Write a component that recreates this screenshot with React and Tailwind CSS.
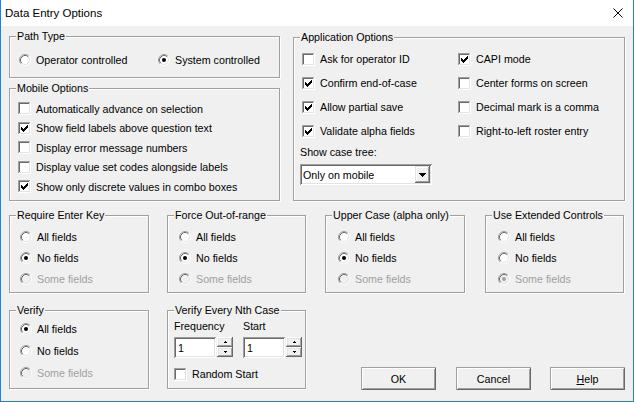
import React from "react";

function Radio({ checked, disabled }) {
  return (
    <svg width="12" height="12" viewBox="0 0 12 12" className="shrink-0">
      <circle cx="6" cy="6" r="5" fill={disabled ? "#f0f0f0" : "#fff"} />
      <path d="M2.11 9.89A5.5 5.5 0 0 1 9.89 2.11" fill="none" stroke="#a0a0a0" />
      <path d="M9.89 2.11A5.5 5.5 0 0 1 2.11 9.89" fill="none" stroke="#ffffff" />
      <path d="M2.82 9.18A4.5 4.5 0 0 1 9.18 2.82" fill="none" stroke="#696969" />
      <path d="M9.18 2.82A4.5 4.5 0 0 1 2.82 9.18" fill="none" stroke="#e3e3e3" />
      {checked && <circle cx="6" cy="6" r="2" fill={disabled ? "#a0a0a0" : "#000"} />}
    </svg>
  );
}

function Check({ checked }) {
  const cols = [
    [3, 5],
    [4, 6],
    [5, 7],
    [6, 6],
    [7, 5],
    [8, 4],
    [9, 3],
  ];
  return (
    <svg width="13" height="13" viewBox="0 0 13 13" className="shrink-0" shapeRendering="crispEdges">
      <rect x="0" y="0" width="13" height="13" fill="#fff" />
      <rect x="0" y="0" width="12" height="1" fill="#a0a0a0" />
      <rect x="0" y="0" width="1" height="12" fill="#a0a0a0" />
      <rect x="1" y="1" width="10" height="1" fill="#696969" />
      <rect x="1" y="1" width="1" height="10" fill="#696969" />
      <rect x="1" y="11" width="11" height="1" fill="#e3e3e3" />
      <rect x="11" y="1" width="1" height="11" fill="#e3e3e3" />
      {checked &&
        cols.map(([x, y]) => <rect key={x} x={x} y={y} width="1" height="3" fill="#000" />)}
    </svg>
  );
}

function Group({ title, className, children }) {
  return (
    <div
      className={`relative border border-[#a0a0a0] shadow-[inset_1px_1px_0_#fff,1px_1px_0_#fff] ${className}`}
    >
      <span className="absolute left-[6px] top-[-7px] px-[1px] bg-[#f0f0f0] leading-[13px] whitespace-nowrap">
        {title}
      </span>
      {children}
    </div>
  );
}

function RadioItem({ label, checked, disabled, className = "" }) {
  return (
    <div className={`flex items-center gap-[5px] ${className}`}>
      <Radio checked={checked} disabled={disabled} />
      <span className={`whitespace-nowrap ${disabled ? "text-[#a0a0a0]" : ""}`}>{label}</span>
    </div>
  );
}

function CheckItem({ label, checked, className = "" }) {
  return (
    <div className={`flex items-center gap-[5px] ${className}`}>
      <Check checked={checked} />
      <span className="whitespace-nowrap">{label}</span>
    </div>
  );
}

function RadioGroup({ title, sel, className, pl, pt, rowH }) {
  const items = ["All fields", "No fields", "Some fields"];
  return (
    <Group title={title} className={className}>
      <div className={`flex flex-col ${pl} ${pt}`}>
        {items.map((it, i) => (
          <RadioItem
            key={it}
            label={it}
            checked={i === sel}
            disabled={i === 2}
            className={rowH}
          />
        ))}
      </div>
    </Group>
  );
}

function Spin({ value }) {
  return (
    <div className="flex">
      <div className="w-[42px] h-[21px] bg-white shadow-[inset_1px_1px_0_#a0a0a0,inset_-1px_-1px_0_#fff,inset_2px_2px_0_#696969,inset_-2px_-2px_0_#e3e3e3] flex items-center pl-[4px]">
        {value}
      </div>
      <div className="flex flex-col w-[16px] ml-[1px]">
        <div className="h-[10px] bg-[#f0f0f0] shadow-[inset_-1px_-1px_0_#696969,inset_1px_1px_0_#fff,inset_-2px_-2px_0_#a0a0a0,inset_2px_2px_0_#e3e3e3] flex items-center justify-center">
          <svg width="3" height="2" viewBox="0 0 3 2" shapeRendering="crispEdges">
            <rect x="1" y="0" width="1" height="1" fill="#000" />
            <rect x="0" y="1" width="3" height="1" fill="#000" />
          </svg>
        </div>
        <div className="h-[10px] bg-[#f0f0f0] shadow-[inset_-1px_-1px_0_#696969,inset_1px_1px_0_#fff,inset_-2px_-2px_0_#a0a0a0,inset_2px_2px_0_#e3e3e3] flex items-center justify-center">
          <svg width="3" height="2" viewBox="0 0 3 2" shapeRendering="crispEdges">
            <rect x="0" y="0" width="3" height="1" fill="#000" />
            <rect x="1" y="1" width="1" height="1" fill="#000" />
          </svg>
        </div>
      </div>
    </div>
  );
}

function Button({ children, className = "" }) {
  return (
    <div
      className={`w-[75px] h-[23px] flex items-center justify-center bg-[#f0f0f0] shadow-[inset_1px_1px_0_#a0a0a0,inset_-1px_-1px_0_#696969,inset_2px_2px_0_#fff,inset_-2px_-2px_0_#a0a0a0] ${className}`}
    >
      {children}
    </div>
  );
}

export default function App() {
  return (
    <div className="w-[634px] h-[402px] bg-[#f0f0f0] border-x border-b border-[#1883d7] flex flex-col font-['Liberation_Sans',Arial,sans-serif] text-[10.7px] leading-[14px] text-black overflow-hidden">
      <div className="h-[26px] shrink-0 bg-white flex items-center pl-[4px] pr-[10px]">
        <span className="text-[11.5px]">Data Entry Options</span>
        <svg className="ml-auto" width="10" height="10" viewBox="0 0 10 10">
          <path d="M0.5 0.5L9.5 9.5M9.5 0.5L0.5 9.5" stroke="#000" strokeWidth="1" fill="none" />
        </svg>
      </div>

      <div className="px-[8px] flex flex-col">
        <div className="flex mt-[10px]">
          <div className="w-[271px] flex flex-col">
            <Group title="Path Type" className="h-[42px]">
              <div className="flex items-center h-[14px] mt-[16px] pl-[9px]">
                <RadioItem label="Operator controlled" className="w-[139px]" />
                <RadioItem label="System controlled" checked />
              </div>
            </Group>
            <Group title="Mobile Options" className="h-[113px] mt-[10px]">
              <div className="flex flex-col pt-[10px] pl-[8px]">
                <CheckItem className="h-[19.5px]" label="Automatically advance on selection" />
                <CheckItem className="h-[19.5px]" label="Show field labels above question text" checked />
                <CheckItem className="h-[19.5px]" label="Display error message numbers" />
                <CheckItem className="h-[19.5px]" label="Display value set codes alongside labels" />
                <CheckItem className="h-[19.5px]" label="Show only discrete values in combo boxes" checked />
              </div>
            </Group>
          </div>

          <Group title="Application Options" className="ml-[13px] w-[332px] h-[164px] mt-[1px]">
            <div className="flex flex-col pt-[9px] pl-[8px]">
              <div className="grid grid-cols-[156px_1fr]">
                <CheckItem className="h-[24px]" label="Ask for operator ID" />
                <CheckItem className="h-[24px]" label="CAPI mode" checked />
                <CheckItem className="h-[24px]" label="Confirm end-of-case" checked />
                <CheckItem className="h-[24px]" label="Center forms on screen" />
                <CheckItem className="h-[24px]" label="Allow partial save" checked />
                <CheckItem className="h-[24px]" label="Decimal mark is a comma" />
                <CheckItem className="h-[24px]" label="Validate alpha fields" checked />
                <CheckItem className="h-[24px]" label="Right-to-left roster entry" />
              </div>
              <div className="mt-[2px] ml-[-2px] h-[14px]">Show case tree:</div>
              <div className="mt-[5px] ml-[-2px] w-[132px] h-[21px] bg-white shadow-[inset_1px_1px_0_#a0a0a0,inset_-1px_-1px_0_#fff,inset_2px_2px_0_#696969,inset_-2px_-2px_0_#e3e3e3] flex items-center pl-[3px] pr-[2px]">
                <span className="flex-1">Only on mobile</span>
                <div className="w-[15px] h-[17px] bg-[#f0f0f0] shadow-[inset_-1px_-1px_0_#696969,inset_1px_1px_0_#e3e3e3,inset_-2px_-2px_0_#a0a0a0,inset_2px_2px_0_#fff] flex items-center justify-center">
                  <svg width="7" height="4" viewBox="0 0 7 4" shapeRendering="crispEdges">
                    <rect x="0" y="0" width="7" height="1" fill="#000" />
                    <rect x="1" y="1" width="5" height="1" fill="#000" />
                    <rect x="2" y="2" width="3" height="1" fill="#000" />
                    <rect x="3" y="3" width="1" height="1" fill="#000" />
                  </svg>
                </div>
              </div>
            </div>
          </Group>
        </div>

        <div className="flex mt-[14px] h-[78px]">
          <RadioGroup title="Require Enter Key" sel={1} className="w-[140px] h-[78px]" pl="pl-[10px]" pt="pt-[10px]" rowH="h-[21px]" />
          <RadioGroup title="Force Out-of-range" sel={1} className="w-[139px] h-[78px] ml-[18px]" pl="pl-[11px]" pt="pt-[10px]" rowH="h-[21px]" />
          <RadioGroup title="Upper Case (alpha only)" sel={1} className="w-[140px] h-[78px] ml-[19px]" pl="pl-[12px]" pt="pt-[10px]" rowH="h-[21px]" />
          <RadioGroup title="Use Extended Controls" sel={2} className="w-[139px] h-[78px] ml-[20px]" pl="pl-[12px]" pt="pt-[10px]" rowH="h-[21px]" />
        </div>

        <div className="flex mt-[17px] h-[79px]">
          <RadioGroup title="Verify" sel={0} className="w-[140px] h-[79px]" pl="pl-[10px]" pt="pt-[7px]" rowH="h-[22px]" />
          <Group title="Verify Every Nth Case" className="w-[139px] h-[79px] ml-[18px]">
            <div className="flex flex-col pl-[6px] pt-[8px]">
              <div className="flex h-[14px]">
                <span className="w-[69px]">Frequency</span>
                <span>Start</span>
              </div>
              <div className="flex mt-[4px]">
                <div className="w-[69px]">
                  <Spin value="1" />
                </div>
                <Spin value="1" />
              </div>
              <CheckItem className="h-[14px] mt-[9px] gap-[4px]" label="Random Start" />
            </div>
          </Group>
          <div className="ml-auto mt-[57px] flex">
            <Button>OK</Button>
            <Button className="ml-[20px]">Cancel</Button>
            <Button className="ml-[19px]">
              <span>
                <span className="underline">H</span>elp
              </span>
            </Button>
          </div>
        </div>
      </div>
    </div>
  );
}
